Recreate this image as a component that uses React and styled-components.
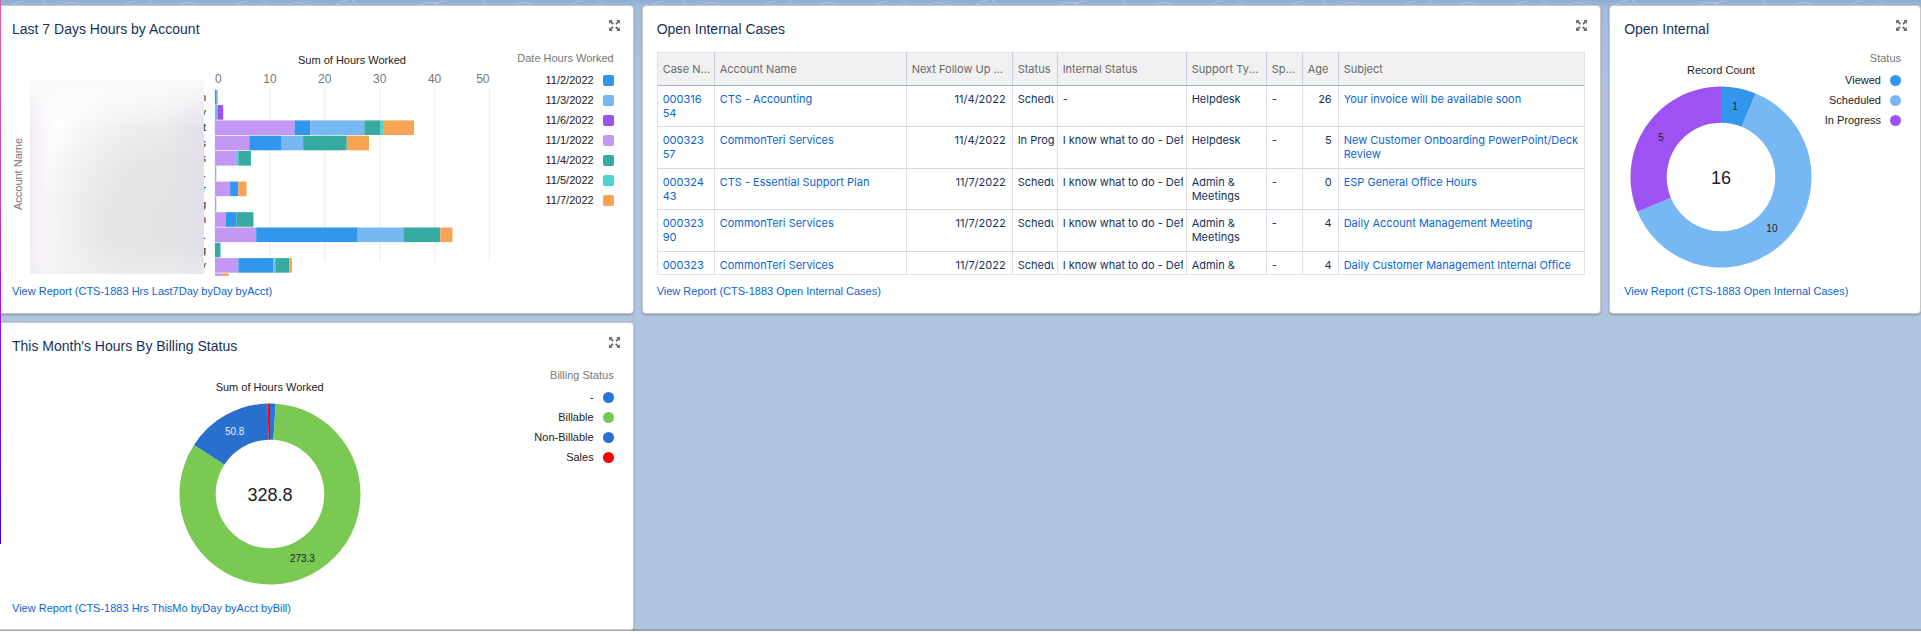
import React from 'react';
import styled, { createGlobalStyle } from 'styled-components';

const GlobalStyle = createGlobalStyle`
  * {
    box-sizing: border-box;
  }

  body {
    margin: 0;
    background: #fff;
    font-family: 'Liberation Sans', Arial, sans-serif;
  }
`;

const Page = styled.main`
  position: relative;
  overflow: hidden;
  padding-top: 5px;
  background: linear-gradient(#8dadd3 0, #a2bcdc 8px, #b0c4df 90px);

  &::after {
    content: '';
    position: absolute;
    left: 0;
    right: 0;
    bottom: 0;
    height: 2px;
    background: rgba(0, 0, 0, 0.17);
  }
`;

const Contours = styled.svg`
  position: absolute;
  top: 0;
  left: 0;
  width: 100%;
  height: 8px;
`;

const EdgeStripe = styled.div`
  position: absolute;
  top: 0;
  left: 0;
  width: 1px;
  height: 544px;
  background: linear-gradient(#e2609c, #c93cc4 35%, #9a10e0 60%, #4b00e0);
`;

const Grid = styled.div`
  position: relative;
  display: grid;
  grid-template-columns: 637fr 960fr 312fr;
  gap: 8px;
  margin-left: -3px;
`;

const Card = styled.section`
  min-width: 0;
  background: #fff;
  border: 1px solid #c9c7c5;
  border-radius: 4px;
  box-shadow: 0 1px 2px rgba(0, 0, 0, 0.25);
`;

const CardHeader = styled.header`
  display: flex;
  justify-content: space-between;
  align-items: flex-start;
  padding: 13px 13px 13px 14px;
`;

const Title = styled.h2`
  margin: 0;
  font-size: 14px;
  line-height: 20px;
  font-weight: 400;
  color: #16325c;
`;

const ExpandButton = styled.button`
  display: flex;
  align-items: center;
  height: 13px;
  padding: 0;
  border: none;
  background: none;
  color: #706e6b;
  cursor: pointer;
`;

const CardBody = styled.div`
  display: flex;
  height: 223px;
  padding: 0 ${(props) => (props.$table ? 15 : 19)}px 0
    ${(props) => (props.$donut ? 7 : 14)}px;
`;

const CardFooter = styled.footer`
  padding: 8px 14px 14px;
  font-size: 11px;
  line-height: 16px;
`;

const Link = styled.a`
  color: #0a66d0;
  text-decoration: none;
`;

const Legend = styled.div`
  flex: none;
  margin-left: auto;
  font-size: 11px;
  text-align: right;
`;

const LegendTitle = styled.div`
  margin-bottom: 5px;
  line-height: 13px;
  color: #777;
`;

const LegendList = styled.ul`
  margin: 0;
  padding: 0;
  list-style: none;
`;

const LegendItem = styled.li`
  display: flex;
  align-items: center;
  justify-content: flex-end;
  gap: 9px;
  height: 20px;
  color: #222;
`;

const Swatch = styled.span`
  width: 11px;
  height: 11px;
  border-radius: ${(props) => (props.$round ? '50%' : '2px')};
  background: ${(props) => props.$color};
`;

const DonutArea = styled.div`
  flex: 1;
  min-width: 0;
  display: flex;
  flex-direction: column;
  align-items: center;
  gap: 8px;
  padding-top: 10px;
`;

const ChartTitle = styled.div`
  font-size: 11px;
  line-height: 16px;
  color: #222;
`;

const DonutSvg = styled.svg`
  flex: none;
  width: 182px;
  height: 182px;
`;

const BarSvg = styled.svg`
  flex: none;
  width: 482px;
  height: 224px;
  font-size: 11px;
`;

const TableFrame = styled.div`
  flex: 1;
  min-width: 0;
  overflow: hidden;
  border: 1px solid #dde3ec;
`;

const Table = styled.table`
  width: 100%;
  table-layout: fixed;
  border-collapse: separate;
  border-spacing: 0;
  font-family: Inter, sans-serif;
  font-size: 11px;
  line-height: 14px;
`;

const Col = styled.col`
  width: ${(props) => (props.$width ? `${props.$width}px` : 'auto')};
`;

const Th = styled.th`
  height: 33px;
  padding: 0 2px 0 5px;
  overflow: hidden;
  text-overflow: ${(props) => (props.$clip ? 'clip' : 'ellipsis')};
  white-space: nowrap;
  text-align: left;
  font-weight: 400;
  color: #696969;
  background: #f1f1f1;
  border-right: 1px solid #c3cfde;
  border-bottom: 1px solid #a0b1c8;

  &:last-child {
    border-right: none;
  }
`;

const Row = styled.tr`
  height: 42px;

  &:nth-child(odd) {
    height: 41px;
  }
`;

const Td = styled.td`
  padding: 6px 6px 0 5px;
  vertical-align: top;
  text-align: ${(props) => (props.$right ? 'right' : 'left')};
  word-break: ${(props) => (props.$breakAll ? 'break-all' : 'normal')};
  color: #16325c;
  border-right: 1px solid #dde0ec;
  border-bottom: 1px solid #d5dae6;

  &:last-child {
    border-right: none;
  }
`;

const ClippedTd = styled(Td)`
  padding-right: 3px;
`;

const Clip = styled.div`
  overflow: hidden;
  white-space: nowrap;
`;

const BLUE = '#3296ed';
const SKY = '#77b7f3';
const PURPLE = '#9d53f2';
const LILAC = '#c398f5';
const TEAL = '#37aaa2';
const CYAN = '#4fd4cd';
const ORANGE = '#f7a454';

const dateLegend = [
  ['11/2/2022', BLUE],
  ['11/3/2022', SKY],
  ['11/6/2022', PURPLE],
  ['11/1/2022', LILAC],
  ['11/4/2022', TEAL],
  ['11/5/2022', CYAN],
  ['11/7/2022', ORANGE],
];

// one entry per account: last letter of the label, then [color, hours] segments
const hoursByAccount = [
  ['n', [[BLUE, 0.3], [SKY, 0.2]]],
  ['y', [[SKY, 0.45], [PURPLE, 1.05]]],
  ['t', [[LILAC, 14.5], [BLUE, 2.85], [SKY, 9.85], [TEAL, 2.95], [CYAN, 0.6], [ORANGE, 5.5]]],
  ['s', [[LILAC, 6.25], [BLUE, 5.9], [SKY, 3.9], [TEAL, 7.95], [ORANGE, 4.05]]],
  ['s', [[LILAC, 3.8], [SKY, 0.45], [TEAL, 2.3]]],
  ['.', [[LILAC, 0.25]]],
  ['r', [[LILAC, 2.75], [BLUE, 1.5], [ORANGE, 1.5]]],
  ['g', [[LILAC, 0.25]]],
  ['n', [[LILAC, 2], [BLUE, 1.95], [TEAL, 3.05]]],
  ['.', [[LILAC, 7.5], [BLUE, 18.5], [SKY, 8.3], [TEAL, 6.75], [ORANGE, 2.2]]],
  ['g', [[TEAL, 1]]],
  ['y', [[LILAC, 4.25], [BLUE, 6.4], [SKY, 0.35], [TEAL, 2.55], [ORANGE, 0.45]]],
  ['', [[LILAC, 1.25], [ORANGE, 1.25]]],
];

const statusData = [
  { label: 'Viewed', value: 1, color: BLUE },
  { label: 'Scheduled', value: 10, color: SKY },
  { label: 'In Progress', value: 5, color: PURPLE },
];

const billingData = [
  { label: '-', value: 3.3, color: '#2874d9', hideValue: true },
  { label: 'Billable', value: 273.3, color: '#79c953' },
  { label: 'Non-Billable', value: 50.8, color: '#296fcd', valueColor: '#e4efff' },
  { label: 'Sales', value: 1.4, color: '#fb0007', hideValue: true },
];

const columns = [
  ['Case Number', 57],
  ['Account Name', 192],
  ['Next Follow Up Date', 106],
  ['Status', 45],
  ['Internal Status', 129],
  ['Support Type Name', 80],
  ['Sponsor', 36],
  ['Age', 36],
  ['Subject', null],
];

const KNOWN = 'I know what to do - Defined';

const cases = [
  ['00031654', 'CTS - Accounting', '11/4/2022', 'Scheduled', '-', 'Helpdesk', '-', 26, 'Your invoice will be available soon'],
  ['00032357', 'CommonTeri Services', '11/4/2022', 'In Progress', KNOWN, 'Helpdesk', '-', 5, 'New Customer Onboarding PowerPoint/Deck Review'],
  ['00032443', 'CTS - Essential Support Plan', '11/7/2022', 'Scheduled', KNOWN, 'Admin & Meetings', '-', 0, 'ESP General Office Hours'],
  ['00032390', 'CommonTeri Services', '11/7/2022', 'Scheduled', KNOWN, 'Admin & Meetings', '-', 4, 'Daily Account Management Meeting'],
  ['000323', 'CommonTeri Services', '11/7/2022', 'Scheduled', KNOWN, 'Admin &', '-', 4, 'Daily Customer Management Internal Office'],
];

const ExpandIcon = () => (
  <svg width="11" height="11" viewBox="0 0 11 11" fill="currentColor" aria-hidden="true">
    {[0, 90, 180, 270].map((angle) => (
      <path
        key={angle}
        transform={`rotate(${angle} 5.5 5.5)`}
        d="M0.4 0H3.7L2.7 1.2L4.6 3.1Q4.9 3.5 4.6 3.8L4 4.4Q3.6 4.7 3.3 4.4L1.3 2.5L0 3.7V0.4Q0 0 0.4 0Z"
      />
    ))}
  </svg>
);

const contourStarts = [8, 42, 58, 121, 148, 176, 232, 262, 284, 331, 352, 417, 430, 482, 510, 566, 598];

const ContourLines = () => (
  <Contours aria-hidden="true">
    <defs>
      <pattern id="contours" width="640" height="8" patternUnits="userSpaceOnUse">
        <g fill="none" stroke="#fff" strokeOpacity="0.22">
          {contourStarts.map((x, i) => (
            <path
              key={x}
              d={
                i % 3 === 0
                  ? `M${x} 8Q${x + 5} 3 ${x + 16} 0`
                  : i % 3 === 1
                    ? `M${x} 0Q${x + 7} 4 ${x + 5} 8`
                    : `M${x} 8C${x + 8} 1 ${x + 18} 0 ${x + 24} 8`
              }
            />
          ))}
        </g>
      </pattern>
    </defs>
    <rect width="100%" height="8" fill="url(#contours)" />
  </Contours>
);

const BarChart = () => {
  const left = 203;
  const perHour = 5.49;
  return (
    <BarSvg role="img" aria-label="Sum of Hours Worked by Account Name">
      <defs>
        <radialGradient id="maskBase" cx="0.8" cy="0.75" r="0.9">
          <stop offset="0" stopColor="#e3e3e3" />
          <stop offset="0.4" stopColor="#e6e6e6" />
          <stop offset="0.65" stopColor="#f0f0f0" />
          <stop offset="0.9" stopColor="#fdfdfd" />
        </radialGradient>
        <linearGradient id="maskTint">
          <stop offset="0" stopColor="#f0e4f4" stopOpacity="0.8" />
          <stop offset="0.15" stopColor="#f7f4fa" stopOpacity="0" />
          <stop offset="0.75" stopColor="#e2dcea" stopOpacity="0" />
          <stop offset="1" stopColor="#e2dcec" stopOpacity="0.8" />
        </linearGradient>
        <linearGradient id="maskFade" x2="0" y2="1">
          <stop offset="0" stopColor="#fafafa" />
          <stop offset="0.25" stopColor="#fafafa" stopOpacity="0" />
          <stop offset="0.85" stopColor="#f0f0f3" stopOpacity="0" />
          <stop offset="1" stopColor="#f0f0f3" stopOpacity="0.5" />
        </linearGradient>
      </defs>
      <text x="340" y="12" textAnchor="middle" fill="#222">
        Sum of Hours Worked
      </text>
      {[0, 10, 20, 30, 40, 50].map((tick) => {
        const x = left + tick * perHour;
        return (
          <g key={tick}>
            <path d={`M${x} 36V210`} stroke="#eef1f6" strokeWidth="1.5" />
            <text
              x={x}
              y="31"
              fontSize="12"
              textAnchor={tick === 0 ? 'start' : tick === 50 ? 'end' : 'middle'}
              fill="#777"
            >
              {tick}
            </text>
          </g>
        );
      })}
      {hoursByAccount.map(([letter, segments], row) => {
        const y = 37.8 + row * 15.3;
        let x = left;
        return (
          <g key={row}>
            <text x="194" y={y + 11} textAnchor="end" fill="#222">
              {letter}
            </text>
            {segments.map(([color, hours]) => {
              const start = x;
              x += hours * perHour;
              return (
                <rect key={color} x={start} y={y} width={hours * perHour} height="14.6" fill={color} />
              );
            })}
          </g>
        );
      })}
      <text transform="translate(10 122) rotate(-90)" textAnchor="middle" fill="#777">
        Account Name
      </text>
      {['maskBase', 'maskTint', 'maskFade'].map((id) => (
        <rect key={id} x="18" y="28" width="174" height="194" fill={`url(#${id})`} />
      ))}
    </BarSvg>
  );
};

const polar = (r, angle) => [91 + r * Math.sin(angle), 91 - r * Math.cos(angle)];

const Donut = ({ data, total }) => {
  const outer = 90.5;
  const inner = 54.3;
  const sum = data.reduce((acc, item) => acc + item.value, 0);
  let angle = 0;
  return (
    <DonutSvg viewBox="0 0 182 182" role="img" aria-label={`Total ${total}`}>
      {data.map((item) => {
        const start = angle;
        const end = start + (item.value / sum) * Math.PI * 2;
        angle = end;
        const large = end - start > Math.PI ? 1 : 0;
        const [lx, ly] = polar(72, (start + end) / 2);
        return (
          <g key={item.label}>
            <path
              fill={item.color}
              d={`M${polar(outer, start)}A${outer} ${outer} 0 ${large} 1 ${polar(outer, end)}L${polar(inner, end)}A${inner} ${inner} 0 ${large} 0 ${polar(inner, start)}Z`}
            />
            {!item.hideValue && (
              <text x={lx} y={ly + 4} fontSize="10" textAnchor="middle" fill={item.valueColor || '#222'}>
                {item.value}
              </text>
            )}
          </g>
        );
      })}
      <text x="91" y="98" fontSize="18" textAnchor="middle" fill="#222">
        {total}
      </text>
    </DonutSvg>
  );
};

const ChartLegend = ({ title, items, round }) => (
  <Legend>
    <LegendTitle>{title}</LegendTitle>
    <LegendList>
      {items.map(([label, color]) => (
        <LegendItem key={label}>
          {label}
          <Swatch $color={color} $round={round} />
        </LegendItem>
      ))}
    </LegendList>
  </Legend>
);

const Widget = ({ title, report, table, donut, children }) => (
  <Card>
    <CardHeader>
      <Title>{title}</Title>
      <ExpandButton type="button" aria-label={`Expand ${title}`}>
        <ExpandIcon />
      </ExpandButton>
    </CardHeader>
    <CardBody $table={table} $donut={donut}>
      {children}
    </CardBody>
    <CardFooter>
      <Link href="#report">View Report ({report})</Link>
    </CardFooter>
  </Card>
);

const DonutWidget = ({ title, report, chartTitle, legendTitle, data, total }) => (
  <Widget title={title} report={report} donut>
    <DonutArea>
      <ChartTitle>{chartTitle}</ChartTitle>
      <Donut data={data} total={total} />
    </DonutArea>
    <ChartLegend title={legendTitle} items={data.map((d) => [d.label, d.color])} round />
  </Widget>
);

const CasesTable = () => (
  <TableFrame>
    <Table>
      <colgroup>
        {columns.map(([name, width]) => (
          <Col key={name} $width={width} />
        ))}
      </colgroup>
      <thead>
        <tr>
          {columns.map(([name]) => (
            <Th key={name} $clip={name === 'Status' || name === 'Age'}>
              {name}
            </Th>
          ))}
        </tr>
      </thead>
      <tbody>
        {cases.map(([number, account, date, status, internal, type, sponsor, age, subject]) => (
          <Row key={number}>
            <Td $breakAll>
              <Link href="#case">{number}</Link>
            </Td>
            <Td>
              <Link href="#account">{account}</Link>
            </Td>
            <Td $right>{date}</Td>
            <ClippedTd>
              <Clip>{status}</Clip>
            </ClippedTd>
            <ClippedTd>
              <Clip>{internal}</Clip>
            </ClippedTd>
            <Td>{type}</Td>
            <Td>{sponsor}</Td>
            <Td $right>{age}</Td>
            <Td>
              <Link href="#case">{subject}</Link>
            </Td>
          </Row>
        ))}
      </tbody>
    </Table>
  </TableFrame>
);

const App = () => (
  <>
    <GlobalStyle />
    <Page>
      <ContourLines />
      <Grid>
        <Widget title="Last 7 Days Hours by Account" report="CTS-1883 Hrs Last7Day byDay byAcct">
          <BarChart />
          <ChartLegend title="Date Hours Worked" items={dateLegend} />
        </Widget>
        <Widget title="Open Internal Cases" report="CTS-1883 Open Internal Cases" table>
          <CasesTable />
        </Widget>
        <DonutWidget
          title="Open Internal"
          report="CTS-1883 Open Internal Cases"
          chartTitle="Record Count"
          legendTitle="Status"
          data={statusData}
          total={16}
        />
        <DonutWidget
          title="This Month's Hours By Billing Status"
          report="CTS-1883 Hrs ThisMo byDay byAcct byBill"
          chartTitle="Sum of Hours Worked"
          legendTitle="Billing Status"
          data={billingData}
          total={328.8}
        />
      </Grid>
      <EdgeStripe />
    </Page>
  </>
);

export default App;
